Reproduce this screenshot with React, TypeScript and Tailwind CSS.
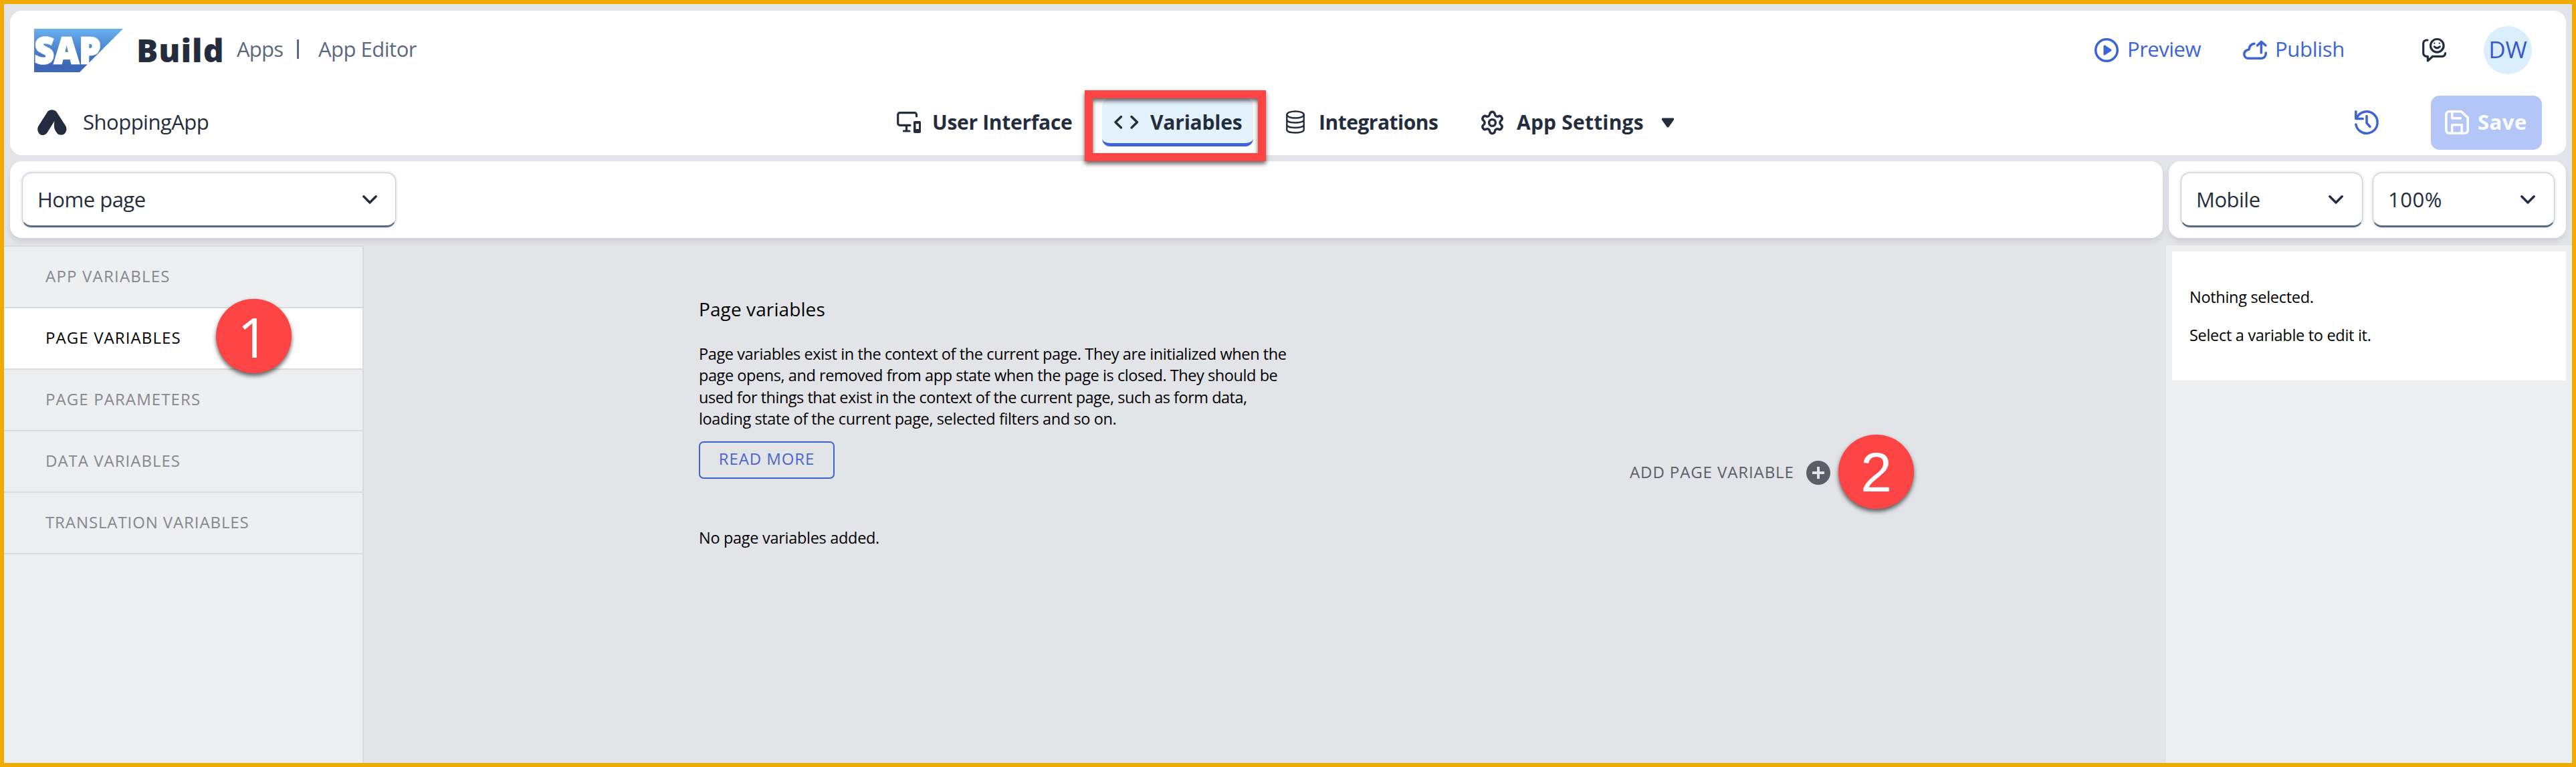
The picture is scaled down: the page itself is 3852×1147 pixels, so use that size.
import type { ReactNode } from 'react';
import { Settings } from 'lucide-react';

function Stroke({ children, w = 36, h = 36, sw = 3.5, className = '' }: { children: ReactNode; w?: number; h?: number; sw?: number; className?: string }) {
  return (
    <svg width={w} height={h} viewBox={`0 0 ${w} ${h}`} fill="none" stroke="currentColor" strokeWidth={sw} strokeLinecap="round" strokeLinejoin="round" className={`shrink-0 overflow-visible ${className}`}>
      {children}
    </svg>
  );
}

function SapLogo() {
  return (
    <svg width="133" height="65" viewBox="0 0 133 65" className="ml-[36px] shrink-0 overflow-visible">
      <defs>
        <linearGradient id="sap" x1="0" y1="0" x2="0" y2="1">
          <stop offset="0" stopColor="#69b0f0" />
          <stop offset="0.5" stopColor="#4a82cc" />
          <stop offset="0.85" stopColor="#3d66b6" />
          <stop offset="1" stopColor="#3d66b6" />
        </linearGradient>
      </defs>
      <path d="M0 0H133L68 65H0Z" fill="url(#sap)" />
      <text x="0.5" y="52" fill="#fff" stroke="#fff" strokeWidth="2.4" fontFamily="Open Sans, sans-serif" fontWeight="800" fontSize="54" textLength="99" lengthAdjust="spacingAndGlyphs">SAP</text>
    </svg>
  );
}

function Select({ label, className, spacing }: { label: string; className: string; spacing: string }) {
  return (
    <div className={`flex h-[82px] items-center justify-between overflow-hidden rounded-[14px] border border-b-[3px] border-[#c8ced6] border-b-[#5b6b82] bg-white pl-[22px] shadow-[0_0_4px_rgba(91,115,139,0.35)] ${className}`}>
      <span className={spacing}>{label}</span>
      <Stroke w={22} h={13}>
        <path d="M1.8 1.8 11 11 20.2 1.8" />
      </Stroke>
    </div>
  );
}

function Marker({ children, className }: { children: ReactNode; className: string }) {
  return (
    <div className={`absolute flex h-[111px] w-[113px] items-center justify-center rounded-full bg-[#fd4444] leading-none text-white shadow-[0_4px_6px_rgba(0,0,0,0.6)] ${className}`}>
      {children}
    </div>
  );
}

function Header() {
  return (
    <header className="ml-[9px] mt-[10px] h-[216px] w-[3822px] rounded-[18px] bg-white">
      <div className="flex h-[118px] items-center">
        <SapLogo />
        <div className="ml-[20px] w-[150px] text-[48px] font-extrabold leading-[60px] tracking-[1px]">Build</div>
        <div className="flex pb-[4px] leading-[40px] text-[#5b6880]">
          <span className="w-[90px] tracking-[-0.8px]">Apps</span>
          <span className="w-[32px] pt-[1px]"><i className="mt-[5px] block h-[29px] w-[3px] bg-[#5b6880]" /></span>
          <span className="tracking-[-0.5px]">App Editor</span>
        </div>
        <div className="ml-auto flex items-center pr-[51px] text-[#3c64d8]">
          <Stroke>
            <circle cx="18" cy="18" r="16.3" />
            <path d="M15 12V24L24 18Z" fill="currentColor" strokeWidth="3" />
          </Stroke>
          <span className="ml-[13px] w-[173px] pb-[4px] tracking-[-0.5px]">Preview</span>
          <Stroke>
            <path d="M17 8.3C12 9 9.6 12.4 9 17 4 18 1.8 21 1.8 24c0 3.5 2.7 6.2 6.2 6.2h19.5c4.2 0 6.8-3.6 6.8-8.2M27.3 22V5.5M21.5 11l5.8-5.6L34 11" />
          </Stroke>
          <span className="ml-[12px] w-[220px] pb-[4px] tracking-[-0.3px]">Publish</span>
          <Stroke sw={3.2} className="text-[#232d3e]">
            <circle cx="22.3" cy="11.3" r="9.8" />
            <path d="M8 3H6.5a4.8 4.8 0 0 0-4.8 4.8V22.5a4.8 4.8 0 0 0 4.8 4.8H8.3V34L15.7 27.3H30a4.5 4.5 0 0 0 4.5-4.8" />
            <path d="M18.2 12.8q4.1 4 8.2 0" strokeWidth="3" />
            <path d="M18.3 7.7h.1M25.7 7.7h.1" strokeWidth="2.2" />
          </Stroke>
          <div className="ml-[56px] flex size-[72px] items-center justify-center rounded-full bg-[#dbeefe] pb-[3px] text-[35px] text-[#3558d0]">DW</div>
        </div>
      </div>
      <div className="flex h-[98px] items-center">
        <div className="flex w-[1326px] items-center pl-[41px]">
          <svg width="44" height="38" viewBox="0 0 44 38" className="shrink-0 fill-[#232d3e]">
            <path d="M14.5 4C17-1 26-1 29 4L42 24c2.2 4 2 9-2 12.5-4 2.5-9 1.5-11.5-2.5C25 29 24 25 25.5 17L14.8 34C12 38.5 6 39.5 2.8 36-.3 32.5-.5 28 1.5 24.5Z" />
          </svg>
          <span className="ml-[24px] pb-[3px] tracking-[-0.5px]">ShoppingApp</span>
        </div>
        <nav className="flex items-center text-[30px] font-bold">
          <div className="flex w-[307px] items-center">
            <Stroke>
              <path d="M29.5 9V6.5a2.8 2.8 0 0 0-2.8-2.8H4.5a2.8 2.8 0 0 0-2.8 2.8V19.5a2.8 2.8 0 0 0 2.8 2.8H20M14.5 23v7M10.5 31h8.5" strokeWidth="3.2" />
              <path d="M27 16h7a2 2 0 0 1 2 2v14a2 2 0 0 1-2 2h-7a2 2 0 0 1-2-2V18a2 2 0 0 1 2-2ZM28.5 20v8h4.500v-8Z" fill="currentColor" stroke="none" fillRule="evenodd" />
            </Stroke>
            <span className="ml-[17px] pb-[1px] tracking-[-0.3px]">User Interface</span>
          </div>
          <div className="relative flex h-[72px] w-[226px] items-center rounded-[12px] border-b-[5px] border-[#3c64d8] bg-[#e4f2fe] pl-[18px] pt-[5px]">
            <Stroke>
              <path d="M10.5 9.5 2 17.7l8.5 8.2M26 9.5l8.5 8.200-8.500 8.200" />
            </Stroke>
            <span className="ml-[18px] pb-[1px] tracking-[-0.2px]">Variables</span>
            <div className="absolute left-[-26px] top-[-12px] h-[106px] w-[271px] border-[12px] border-[#fd4444] drop-shadow-[0_4px_3px_rgba(0,0,0,0.6)]" />
          </div>
          <div className="ml-[49px] flex w-[289px] items-center">
            <Stroke w={28} h={36} sw={2.4}>
              <ellipse cx="14" cy="6.5" rx="12.7" ry="5" />
              <path d="M1.3 6.5v22.500c0 6 25.400 6 25.400 0V6.500M1.300 14c0 6 25.400 6 25.400 0M1.300 21.500c0 6 25.400 6 25.400 0" />
            </Stroke>
            <span className="ml-[21px] pb-[1px] tracking-[-0.5px]">Integrations</span>
          </div>
          <Settings size={39} strokeWidth={2.1} className="shrink-0" />
          <span className="ml-[17px] w-[217px] pb-[1px] tracking-[0.2px]">App Settings</span>
          <svg width="18" height="15" viewBox="0 0 18 15" fill="currentColor" stroke="currentColor" strokeWidth="2" strokeLinejoin="round">
            <path d="M1 1.500H17V3L9.500 13.500H8.500L1 3Z" />
          </svg>
        </nav>
        <div className="ml-auto flex items-center pr-[36px] text-[#3c64d8]">
          <Stroke>
            <path d="M1.800 21A16.300 16.300 0 1 0 2.800 11.800M1.800 1.800V12.500H12.300M18 8.500V19l5 5.500" />
          </Stroke>
          <div className="ml-[78px] flex h-[81px] w-[166px] items-center rounded-[13px] bg-[#b4c5f8] pl-[21px] font-bold text-white">
            <Stroke>
              <path d="M6 1.800H24.500L34.200 11V30a4.200 4.200 0 0 1-4.200 4.200H6A4.200 4.200 0 0 1 1.800 30V6A4.200 4.200 0 0 1 6 1.800ZM10.700 2v9.700H23.500M10.700 34V21.700H25.200V34" />
            </Stroke>
            <span className="ml-[13px] pb-[3px] tracking-[0.5px]">Save</span>
          </div>
        </div>
      </div>
    </header>
  );
}

const sections = [
  { name: 'APP VARIABLES', spacing: 'tracking-[1.2px]' },
  { name: 'PAGE VARIABLES', spacing: 'tracking-[1.1px]', active: true },
  { name: 'PAGE PARAMETERS', spacing: 'tracking-[1.1px]' },
  { name: 'DATA VARIABLES', spacing: 'tracking-[1px]' },
  { name: 'TRANSLATION VARIABLES', spacing: 'tracking-[0.9px]' },
];

function Sidebar() {
  return (
    <aside className="h-[774px] w-[538px] shrink-0 border-r-2 border-t-2 border-[#d8dadd] bg-[#eeeff1]">
      {sections.map(({ name, spacing, active }) => (
        <div key={name} className={`relative flex h-[92px] items-center border-b-2 border-[#d8dadd] pb-[3px] pl-[62px] text-[24px] ${spacing} ${active ? 'bg-white text-black' : 'text-[#85878f]'}`}>
          {name}
          {active && (
            <Marker className="left-[317px] top-[-14px] z-10 pr-[2px] text-[82px] font-medium tracking-normal">1</Marker>
          )}
        </div>
      ))}
    </aside>
  );
}

export default function App() {
  return (
    <div className="h-[1147px] w-[3852px] overflow-hidden border-[6px] border-[#f0ab00] bg-[#e3e4e8] font-['Open_Sans',sans-serif] text-[31px] leading-[42px] text-[#232d3e]">
      <Header />
      <div className="ml-[9px] mt-[9px] flex h-[115px] gap-[9px]">
        <div className="w-[3219px] rounded-[18px] bg-white pl-[18px] pt-[17px] shadow-[0_5px_9px_rgba(0,0,0,0.09)]">
          <Select label="Home page" spacing="tracking-[-0.5px]" className="w-[559px] pr-[27px]" />
        </div>
        <div className="flex w-[594px] gap-[15px] rounded-[18px] bg-white pl-[18px] pt-[17px] shadow-[0_5px_9px_rgba(0,0,0,0.09)]">
          <Select label="Mobile" spacing="tracking-[-0.5px]" className="w-[272px] pr-[28px]" />
          <Select label="100%" spacing="tracking-[0.5px]" className="w-[272px] pr-[28px]" />
        </div>
      </div>
      <div className="mt-[11px] flex h-[774px] text-black">
        <Sidebar />
        <main className="flex grow pl-[501px] text-[23.5px]">
          <section className="w-[1392px] pt-[75px]">
            <h2 className="text-[28px] leading-[40px] tracking-[0.1px]">Page variables</h2>
            <p className="mt-[31px] whitespace-nowrap leading-[32.4px] tracking-[-0.4px]">
              Page variables exist in the context of the current page. They are initialized when the<br />
              <span className="tracking-[-0.43px]">page opens, and removed from app state when the page is closed. They should be</span><br />
              <span className="tracking-[-0.49px]">used for things that exist in the context of the current page, such as form data,</span><br />
              loading state of the current page, selected filters and so on.
            </p>
            <button className="mt-[17px] flex h-[56px] w-[203px] items-center justify-center rounded-[7px] border-2 border-[#3c64d0] pb-[3px] text-[24px] tracking-[0.9px] text-[#4a66cc]">READ MORE</button>
            <p className="mt-[67px] tracking-[-0.3px]">No page variables added.</p>
          </section>
          <div className="relative mt-[322px] flex h-[36px] items-center text-[24px] tracking-[0.9px] text-[#5b5e67]">
            <span className="w-[264px] whitespace-nowrap pb-[3px]">ADD PAGE VARIABLE</span>
            <svg width="36" height="36" viewBox="0 0 36 36">
              <circle cx="18" cy="18" r="18" fill="#5b5e67" />
              <path d="M9 18H27M18 9V27" stroke="#e3e4e8" strokeWidth="4" />
            </svg>
            <Marker className="left-[312px] top-[-39px] font-['Liberation_Sans',Arial,sans-serif] text-[84px] tracking-normal">2</Marker>
          </div>
        </main>
        <aside className="w-[607px] shrink-0 bg-[#eeeff1] pl-[9px] pt-[9px]">
          <div className="h-[193px] w-[589px] bg-white pl-[26px] pt-[47px] text-[23.5px] leading-[42px] tracking-[-0.3px]">
            <p>Nothing selected.</p>
            <p className="mt-[15px]">Select a variable to edit it.</p>
          </div>
        </aside>
      </div>
    </div>
  );
}
